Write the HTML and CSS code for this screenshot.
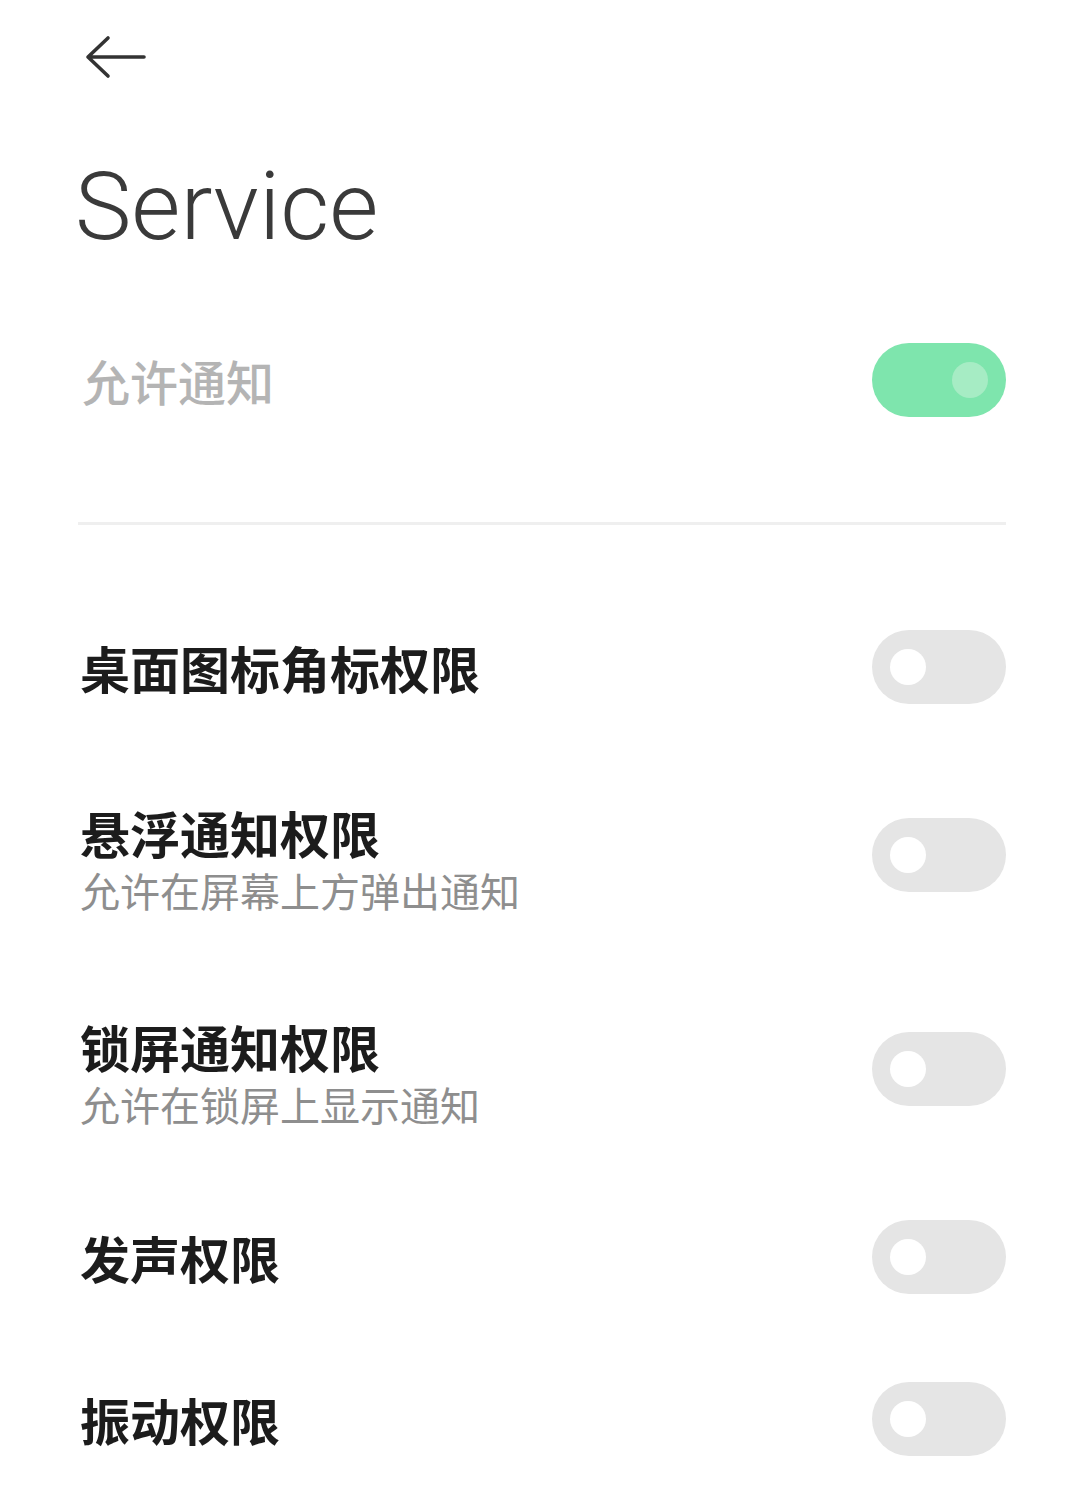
FILE: index.html
```html
<!DOCTYPE html>
<html lang="zh-CN">
<head>
  <meta charset="UTF-8">
  <title>Service</title>
  <link rel="stylesheet" href="styles.css">
</head>
<body>

  <header class="header">
    <div class="topbar">
      <svg class="back" width="62" height="46" viewBox="0 0 62 46">
        <path d="M60 22 H5 M24 3 L4 22 L24 41" fill="none" stroke="#333" stroke-width="3.6" stroke-linecap="round" stroke-linejoin="round"/>
      </svg>
    </div>
    <h1 class="title">Service</h1>
  </header>

  <div class="row master">
    <div class="label muted">允许通知</div>
    <div class="switch on"><span class="knob"></span></div>
  </div>

  <div class="divider"></div>

  <div class="row">
    <div class="label">桌面图标角标权限</div>
    <div class="switch"><span class="knob"></span></div>
  </div>

  <div class="row tall">
    <div class="text">
      <div class="label">悬浮通知权限</div>
      <div class="sub">允许在屏幕上方弹出通知</div>
    </div>
    <div class="switch"><span class="knob"></span></div>
  </div>

  <div class="row tall">
    <div class="text">
      <div class="label">锁屏通知权限</div>
      <div class="sub">允许在锁屏上显示通知</div>
    </div>
    <div class="switch"><span class="knob"></span></div>
  </div>

  <div class="row">
    <div class="label">发声权限</div>
    <div class="switch"><span class="knob"></span></div>
  </div>

  <div class="row">
    <div class="label">振动权限</div>
    <div class="switch"><span class="knob"></span></div>
  </div>

</body>
</html>
```

FILE: styles.css
```css
body {
  margin: 0;
  background-color: #fff;
  color: #1a1a1a;
  font-family: "Noto Sans CJK SC", "Noto Sans", sans-serif;
  padding: 0 74px 0 80px;
}

.header {
  height: 292px;
}

.topbar {
  box-sizing: border-box;
  height: 161px;
  padding: 35px 0 0 4px;
}

.back {
  display: block;
}

.title {
  margin: 0 0 0 -5px;
  font-family: Roboto, "Noto Sans", sans-serif;
  font-weight: 300;
  font-size: 95px;
  line-height: 92px;
  color: #3a3a3a;
}

.row {
  display: flex;
  align-items: center;
  justify-content: space-between;
  height: 162px;
}

.row.master {
  height: 176px;
}

.row.tall {
  height: 214px;
}

.label {
  font-size: 50px;
  line-height: 60px;
  font-weight: 700;
  color: #1c1c1c;
}

.label.muted {
  font-size: 48px;
  font-weight: 500;
  color: #b4b4b4;
  margin-left: 2px;
}

.text {
  padding-top: 10px;
}

.sub {
  font-size: 40px;
  line-height: 56px;
  color: #8e8e8e;
}

.divider {
  height: 3px;
  background: #efefef;
  margin: 54px 0 61px -2px;
}

.switch {
  display: flex;
  align-items: center;
  justify-content: flex-start;
  box-sizing: border-box;
  width: 134px;
  height: 74px;
  padding: 0 18px;
  border-radius: 37px;
  background: #e5e5e5;
}

.switch .knob {
  width: 36px;
  height: 36px;
  border-radius: 50%;
  background: #fff;
}

.switch.on {
  justify-content: flex-end;
  background: #7ee5ad;
}

.switch.on .knob {
  background: #a6ecc4;
}
```
